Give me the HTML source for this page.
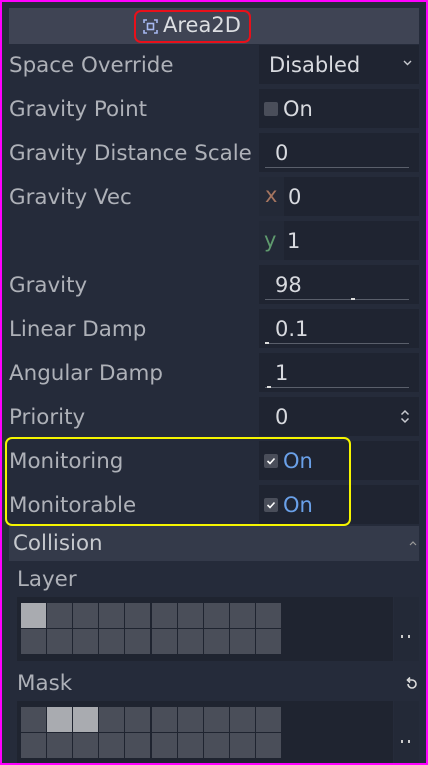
<!DOCTYPE html>
<html><head><style>
*{margin:0;padding:0;box-sizing:border-box}
body{width:428px;height:765px;background:#252b3a;font-family:"DejaVu Sans","Liberation Sans",sans-serif;color:#b5b8be;overflow:hidden;position:relative}
.frame{position:absolute;inset:0;border:2px solid #f0f;}
.a{position:absolute}
.lbl{position:absolute;left:9px;font-size:21.4px;line-height:1;color:#aeb1b8}
.val{position:absolute;left:259px;width:160px;height:39px;background:#1f2431}
.vt{position:absolute;font-size:21px;color:#d8dadf;line-height:1}
.line{position:absolute;left:265px;width:144px;height:1px;background:#5a5f6b}
.cb{position:absolute;width:14px;height:14px;background:#4a4e5a;border-radius:2px}
.cell{position:absolute;width:25px;height:25px;background:#4a4e59}
.on{background:#a9abb0}
.dots{position:absolute;width:9px;height:3px;border-left:2px solid #ccc;border-right:2px solid #ccc}
</style></head><body>
<div class="a" style="left:9px;top:8px;width:410px;height:36px;background:#3f4454"></div>
<div class="a" style="left:134px;top:10px;width:117px;height:33px;border:2px solid #e8101a;border-radius:7px"></div>
<svg class="a" style="left:143px;top:19px" width="15" height="15" viewBox="0 0 15 15" fill="none" stroke="#a6b8f0" stroke-width="1.6"><path d="M1 4V1h3M11 1h3v3M14 11v3h-3M4 14H1v-3"/><rect x="4.5" y="4.5" width="6" height="6"/></svg>
<div class="vt" style="left:163px;top:15px;font-size:21px;color:#dcdee2">Area2D</div>

<div class="val" style="top:45px"></div><div class="lbl" style="top:55px">Space Override</div><div class="vt" style="left:269px;top:55px">Disabled</div>
<svg class="a" style="left:403px;top:60px" width="9" height="6"><path d="M1 1l3.5 3.5L8 1" stroke="#c8cad0" stroke-width="1.4" fill="none"/></svg>

<div class="val" style="top:89px"></div><div class="lbl" style="top:99px">Gravity Point</div><div class="cb" style="left:264px;top:102px"></div><div class="vt" style="left:283px;top:99px">On</div>

<div class="val" style="top:133px"></div><div class="lbl" style="top:143px">Gravity Distance Scale</div><div class="vt" style="left:275px;top:143px">0</div><div class="line" style="top:167px"></div>

<div class="val" style="top:177px;height:83px"></div>
<div class="a" style="left:259px;top:177px;width:25px;height:39px;background:#232937"></div>
<div class="a" style="left:259px;top:221px;width:25px;height:39px;background:#232937"></div>
<div class="a" style="left:259px;top:216px;width:160px;height:5px;background:#252b3a"></div>
<div class="lbl" style="top:187px">Gravity Vec</div>
<div class="vt" style="left:265px;top:185px;color:#a57560">x</div><div class="vt" style="left:288px;top:187px">0</div>
<div class="vt" style="left:264px;top:230px;color:#5f9a6e">y</div><div class="vt" style="left:287px;top:231px">1</div>

<div class="val" style="top:265px"></div><div class="lbl" style="top:275px">Gravity</div><div class="vt" style="left:275px;top:275px">98</div><div class="line" style="top:299px"></div><div class="a" style="left:351px;top:298px;width:4px;height:2px;background:#ddd"></div>
<div class="val" style="top:309px"></div><div class="lbl" style="top:319px">Linear Damp</div><div class="vt" style="left:275px;top:319px">0.1</div><div class="line" style="top:343px"></div><div class="a" style="left:265px;top:342px;width:4px;height:2px;background:#ddd"></div>
<div class="val" style="top:353px"></div><div class="lbl" style="top:363px">Angular Damp</div><div class="vt" style="left:275px;top:363px">1</div><div class="line" style="top:387px"></div><div class="a" style="left:267px;top:386px;width:4px;height:2px;background:#ddd"></div>
<div class="val" style="top:397px"></div><div class="lbl" style="top:407px">Priority</div><div class="vt" style="left:275px;top:407px">0</div>
<svg class="a" style="left:400px;top:409px" width="10" height="15"><path d="M1.5 5.5L5 2l3.5 3.5M1.5 9.5L5 13l3.5-3.5" stroke="#c8cad0" stroke-width="1.5" fill="none"/></svg>

<div class="val" style="top:441px"></div><div class="lbl" style="top:451px">Monitoring</div><div class="cb" style="left:264px;top:454px"></div>
<svg class="a" style="left:266px;top:456px" width="10" height="10"><path d="M1.5 5l2.5 2.5L8.5 2.5" stroke="#fff" stroke-width="1.6" fill="none"/></svg>
<div class="vt" style="left:283px;top:451px;color:#6aa0e8">On</div>
<div class="val" style="top:485px"></div><div class="lbl" style="top:495px">Monitorable</div><div class="cb" style="left:264px;top:498px"></div>
<svg class="a" style="left:266px;top:500px" width="10" height="10"><path d="M1.5 5l2.5 2.5L8.5 2.5" stroke="#fff" stroke-width="1.6" fill="none"/></svg>
<div class="vt" style="left:283px;top:495px;color:#6aa0e8">On</div>
<div class="a" style="left:5px;top:437px;width:346px;height:89px;border:2px solid #f5f500;border-radius:7px"></div>

<div class="a" style="left:9px;top:526px;width:410px;height:35px;background:#343a4a"></div>
<div class="lbl" style="left:13px;top:533px;color:#c6c9ce">Collision</div>
<svg class="a" style="left:409px;top:541px" width="8" height="5"><path d="M1 4l3-3 3 3" stroke="#999" stroke-width="1.2" fill="none"/></svg>

<div class="lbl" style="left:17px;top:569px">Layer</div>
<div class="a" style="left:17px;top:597px;width:376px;height:64px;background:#1f2430"></div>
<div class="a" style="left:394px;top:597px;width:25px;height:64px;background:#232937"></div>
<div class="dots" style="left:401px;top:635px"></div>
<div class="lbl" style="left:17px;top:673px">Mask</div>
<svg class="a" style="left:405px;top:677px" width="13" height="13"><path d="M3 7a4 4 0 1 0 4-4H4" stroke="#ddd" stroke-width="1.6" fill="none"/><path d="M5 0.5L2.5 3 5 5.5" stroke="#ddd" stroke-width="1.6" fill="none"/></svg>
<div class="a" style="left:17px;top:701px;width:376px;height:62px;background:#1f2430"></div>
<div class="a" style="left:394px;top:701px;width:25px;height:62px;background:#232937"></div>
<div class="dots" style="left:401px;top:740px"></div>
<div id="g"></div>
<script>
var g=document.getElementById('g'),h='';
[[603,[0]],[707,[1,2]]].forEach(function(b){for(var r=0;r<2;r++)for(var i=0;i<10;i++){var x=21+i*26+(i>=5?1:0);var y=b[0]+r*26;var on=r==0&&b[1].indexOf(i)>=0;h+='<div class="cell'+(on?' on':'')+'" style="left:'+x+'px;top:'+y+'px"></div>';}});
g.innerHTML=h;
</script>
<div class="frame"></div>
</body></html>
